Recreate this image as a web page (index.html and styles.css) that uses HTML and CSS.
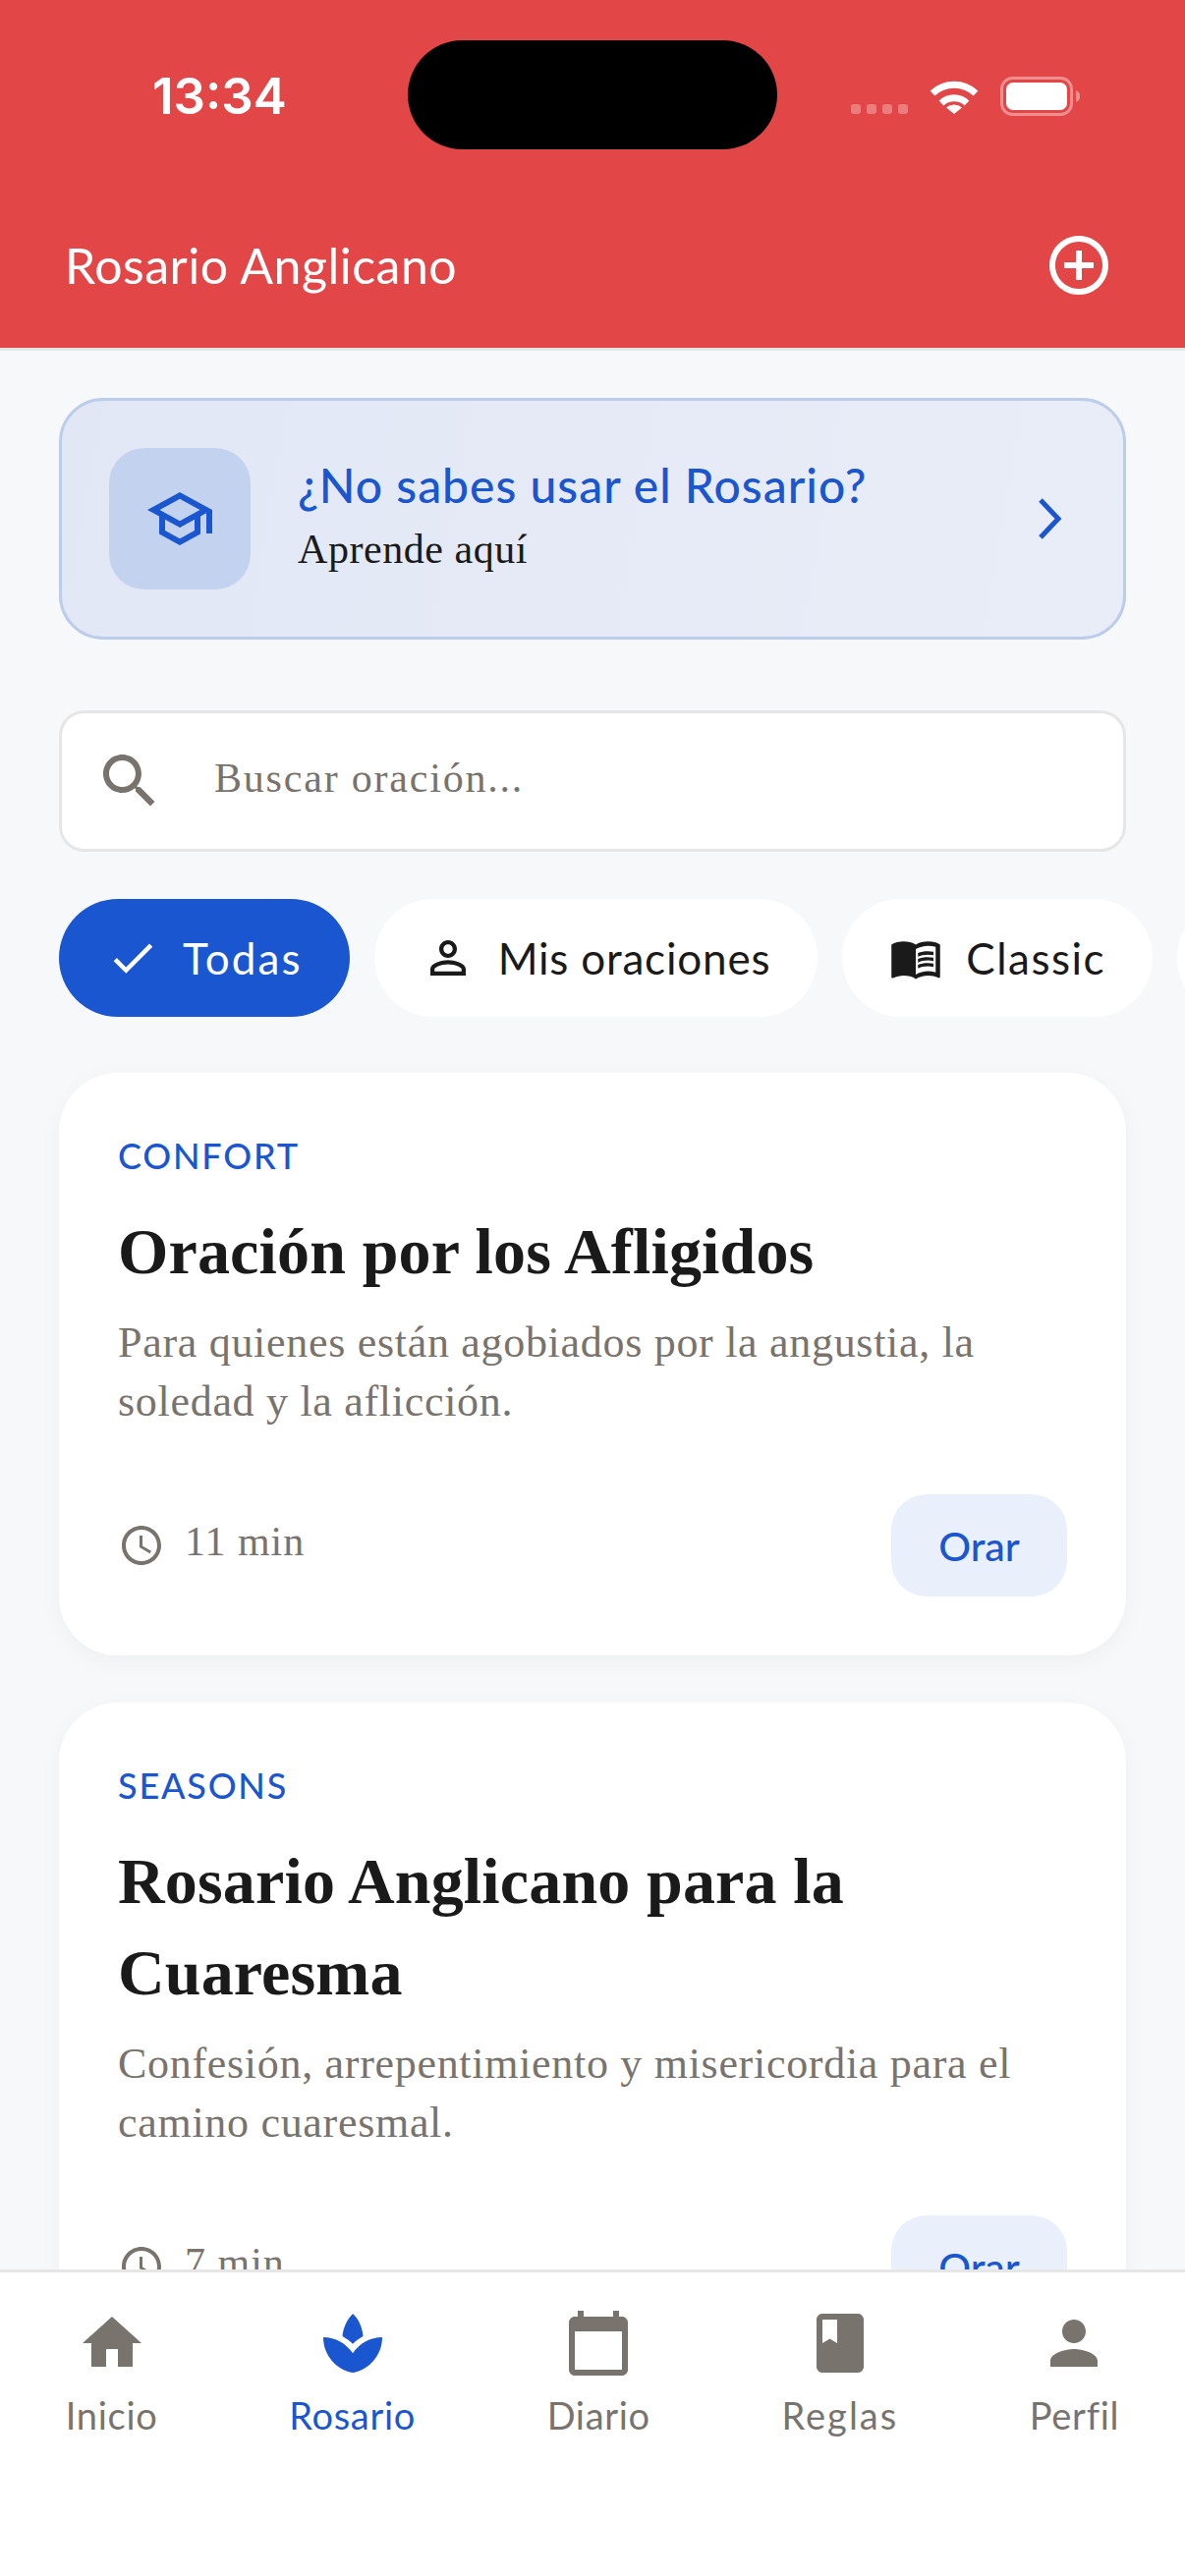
FILE: index.html
```html
<!DOCTYPE html>
<html lang="es">
<head>
<meta charset="utf-8">
<title>Rosario Anglicano</title>
<link rel="stylesheet" href="styles.css">
</head>
<body>
<div class="app">
  <header class="header">
    <div class="status">
      <span class="time">13:34</span>
      <div class="island"></div>
      <div class="status-icons">
        <svg class="dots" width="58" height="10" viewBox="0 0 58 10"><rect width="10" height="10" rx="3"/><rect x="16" width="10" height="10" rx="3"/><rect x="32" width="10" height="10" rx="3"/><rect x="48" width="10" height="10" rx="3"/></svg>
        <svg class="wifi" width="50" height="36" viewBox="0 0 50 36"><path d="M3 15 A 32 32 0 0 1 47 15" fill="none" stroke="#fff" stroke-width="7"/><path d="M12 25 A 19 19 0 0 1 38 25" fill="none" stroke="#fff" stroke-width="7"/><path d="M25 36 L17 29.5 A 12 12 0 0 1 33 29.5 Z" fill="#fff"/></svg>
        <svg class="battery" width="82" height="40" viewBox="0 0 82 40"><rect x="1.5" y="1.5" width="71" height="37" rx="11" fill="none" stroke="#fff" stroke-opacity=".4" stroke-width="3"/><rect x="6" y="6" width="62" height="28" rx="7" fill="#fff"/><path d="M77 14 C80 15 81 17 81 20 C81 23 80 25 77 26 Z" fill="#fff" fill-opacity=".4"/></svg>
      </div>
    </div>
    <div class="title-row">
      <h1 class="app-title">Rosario Anglicano</h1>
      <svg class="icon" viewBox="0 0 24 24" fill="#fff"><path d="M13 7h-2v4H7v2h4v4h2v-4h4v-2h-4V7zm-1-5C6.48 2 2 6.48 2 12s4.48 10 10 10 10-4.48 10-10S17.52 2 12 2zm0 18c-4.41 0-8-3.59-8-8s3.59-8 8-8 8 3.59 8 8-3.59 8-8 8z"/></svg>
    </div>
  </header>

  <main class="content">
    <section class="banner">
      <div class="banner-icon">
        <svg class="icon" viewBox="0 0 24 24" fill="#1a56cf"><path d="M12 3L1 9l4 2.18v6L12 21l7-3.82v-6l2-1.09V17h2V9L12 3zm6.82 6L12 12.72 5.18 9 12 5.28 18.82 9zM17 15.99l-5 2.73-5-2.73v-3.72L12 15l5-2.73v3.72z"/></svg>
      </div>
      <div class="banner-text">
        <div class="banner-title">¿No sabes usar el Rosario?</div>
        <div class="banner-sub">Aprende aquí</div>
      </div>
      <svg class="chevron" width="28" height="44" viewBox="0 0 28 44"><path d="M4 3 L22 22 L4 41" fill="none" stroke="#1a56cf" stroke-width="5"/></svg>
    </section>

    <div class="search">
      <svg class="icon" viewBox="0 0 24 24" fill="#78736d"><path d="M15.5 14h-.79l-.28-.27C15.41 12.59 16 11.11 16 9.5 16 5.91 13.09 3 9.5 3S3 5.91 3 9.5 5.91 16 9.5 16c1.61 0 3.09-.59 4.23-1.57l.27.28v.79l5 4.99L20.49 19l-4.99-5zm-6 0C7.01 14 5 11.99 5 9.5S7.01 5 9.5 5 14 7.01 14 9.5 11.99 14 9.5 14z"/></svg>
      <span class="placeholder">Buscar oración...</span>
    </div>

    <div class="chips">
      <div class="chip chip-active">
        <svg class="chip-icon" viewBox="0 0 24 24" fill="#fff"><path d="M9 16.17L4.83 12l-1.42 1.41L9 19 21 7l-1.41-1.41z"/></svg>
        <span class="chip-label chip-label-todas">Todas</span>
      </div>
      <div class="chip">
        <svg class="chip-icon" viewBox="0 0 24 24" fill="#1a1a1a"><path d="M12 5.9c1.16 0 2.1.94 2.1 2.1s-.94 2.1-2.1 2.1S9.9 9.16 9.9 8s.94-2.1 2.1-2.1m0 9c2.97 0 6.1 1.46 6.1 2.1v1.1H5.9V17c0-.64 3.13-2.1 6.1-2.1M12 4C9.79 4 8 5.79 8 8s1.79 4 4 4 4-1.79 4-4-1.79-4-4-4zm0 9c-2.67 0-8 1.34-8 4v3h16v-3c0-2.66-5.33-4-8-4z"/></svg>
        <span class="chip-label chip-label-mis">Mis oraciones</span>
      </div>
      <div class="chip">
        <svg class="chip-icon" viewBox="0 0 24 24" fill="#1a1a1a"><path d="M21 5c-1.11-.35-2.33-.5-3.5-.5-1.95 0-4.05.4-5.5 1.5-1.45-1.1-3.55-1.5-5.5-1.5S2.45 4.9 1 6v14.65c0 .25.25.5.5.5.1 0 .15-.05.25-.05C3.1 20.45 5.05 20 6.5 20c1.95 0 4.05.4 5.5 1.5 1.35-.85 3.8-1.5 5.5-1.5 1.65 0 3.35.3 4.75 1.05.1.05.15.05.25.05.25 0 .5-.25.5-.5V6c-.6-.45-1.25-.75-2-1zm0 13.5c-1.1-.35-2.3-.5-3.5-.5-1.7 0-4.15.65-5.5 1.5V8c1.35-.85 3.8-1.5 5.5-1.5 1.2 0 2.4.15 3.5.5v11.5z"/><path d="M17.5 10.5c.88 0 1.73.09 2.5.26V9.24c-.79-.15-1.64-.24-2.5-.24-1.7 0-3.24.29-4.5.83v1.66c1.13-.64 2.7-.99 4.5-.99zM13 12.49v1.66c1.13-.64 2.7-.99 4.5-.99.88 0 1.73.09 2.5.26V11.9c-.79-.15-1.64-.24-2.5-.24-1.7 0-3.24.3-4.5.83zM17.5 14.33c-1.7 0-3.24.29-4.5.83v1.66c1.13-.64 2.7-.99 4.5-.99.88 0 1.73.09 2.5.26v-1.52c-.79-.16-1.64-.24-2.5-.24z"/></svg>
        <span class="chip-label chip-label-classic">Classic</span>
      </div>
      <div class="chip chip-rest"></div>
    </div>

    <article class="card">
      <div class="card-tag">CONFORT</div>
      <h2 class="card-title">Oración por los Afligidos</h2>
      <p class="card-desc">Para quienes están agobiados por la angustia, la soledad y la aflicción.</p>
      <div class="card-foot">
        <div class="duration">
          <svg class="clock" viewBox="0 0 24 24" fill="#78736d"><path d="M11.99 2C6.47 2 2 6.48 2 12s4.47 10 9.99 10C17.52 22 22 17.52 22 12S17.52 2 11.99 2zM12 20c-4.42 0-8-3.58-8-8s3.58-8 8-8 8 3.58 8 8-3.58 8-8 8z"/><path d="M12.5 7H11v6l5.25 3.15.75-1.23-4.5-2.67z"/></svg>
          <span class="duration-text">11 min</span>
        </div>
        <div class="pray">Orar</div>
      </div>
    </article>

    <article class="card">
      <div class="card-tag">SEASONS</div>
      <h2 class="card-title">Rosario Anglicano para la Cuaresma</h2>
      <p class="card-desc">Confesión, arrepentimiento y misericordia para el camino cuaresmal.</p>
      <div class="card-foot">
        <div class="duration">
          <svg class="clock" viewBox="0 0 24 24" fill="#78736d"><path d="M11.99 2C6.47 2 2 6.48 2 12s4.47 10 9.99 10C17.52 22 22 17.52 22 12S17.52 2 11.99 2zM12 20c-4.42 0-8-3.58-8-8s3.58-8 8-8 8 3.58 8 8-3.58 8-8 8z"/><path d="M12.5 7H11v6l5.25 3.15.75-1.23-4.5-2.67z"/></svg>
          <span class="duration-text">7 min</span>
        </div>
        <div class="pray">Orar</div>
      </div>
    </article>
  </main>

  <nav class="nav">
    <div class="nav-item">
      <svg class="icon" viewBox="0 0 24 24" fill="#78736d"><path d="M10 20v-6h4v6h5v-8h3L12 3 2 12h3v8z"/></svg>
      <span class="nav-label">Inicio</span>
    </div>
    <div class="nav-item nav-active">
      <svg class="icon" viewBox="0 0 24 24" fill="#1a56cf"><path d="M15.49 9.63c-.18-2.79-1.31-5.51-3.43-7.63-2.14 2.14-3.32 4.86-3.55 7.63 1.28.68 2.46 1.56 3.49 2.63 1.03-1.06 2.21-1.94 3.49-2.63zM12 15.45C9.85 12.17 6.18 10 2 10c0 5.32 3.36 9.82 8.03 11.49.63.23 1.29.4 1.97.51.68-.12 1.33-.29 1.97-.51C18.64 19.82 22 15.32 22 10c-4.18 0-7.85 2.17-10 5.45z"/></svg>
      <span class="nav-label">Rosario</span>
    </div>
    <div class="nav-item">
      <svg class="icon" viewBox="0 0 24 24" fill="#78736d"><path d="M20 3h-1V1h-2v2H7V1H5v2H4c-1.1 0-2 .9-2 2v16c0 1.1.9 2 2 2h16c1.1 0 2-.9 2-2V5c0-1.1-.9-2-2-2zm0 18H4V8h16v13z"/></svg>
      <span class="nav-label">Diario</span>
    </div>
    <div class="nav-item">
      <svg class="icon" viewBox="0 0 24 24" fill="#78736d"><path d="M18 2H6c-1.1 0-2 .9-2 2v16c0 1.1.9 2 2 2h12c1.1 0 2-.9 2-2V4c0-1.1-.9-2-2-2zM6 4h5v8l-2.5-1.5L6 12V4z"/></svg>
      <span class="nav-label nav-label-wide">Reglas</span>
    </div>
    <div class="nav-item">
      <svg class="icon" viewBox="0 0 24 24" fill="#78736d"><path d="M12 12c2.21 0 4-1.79 4-4s-1.79-4-4-4-4 1.79-4 4 1.79 4 4 4zm0 2c-2.67 0-8 1.34-8 4v2h16v-2c0-2.66-5.33-4-8-4z"/></svg>
      <span class="nav-label">Perfil</span>
    </div>
  </nav>
</div>
</body>
</html>
```
FILE: styles.css
```css
* { box-sizing: border-box; }
html, body { margin: 0; padding: 0; }
body { width: 1206px; height: 2622px; overflow: hidden; font-family: "Lato", sans-serif; background: #f7f8fa; color: #1a1a1a; }
.app { width: 1206px; height: 2622px; display: flex; flex-direction: column; }
.icon { width: 72px; height: 72px; display: block; flex: none; }

.header { background: #e34646; border-bottom: 3px solid #e6e6e6; height: 357px; flex: none; display: flex; flex-direction: column; }
.status { height: 234px; flex: none; position: relative; display: flex; justify-content: space-between; align-items: flex-start; padding: 68px 106px 0 155px; }
.time { font-family: "Inter", sans-serif; font-weight: 600; font-size: 51px; line-height: 60px; color: #fff; }
.island { position: absolute; left: 415px; top: 41px; width: 376px; height: 111px; background: #000; border-radius: 56px; }
.status-icons { display: flex; align-items: flex-end; gap: 22px; padding-top: 10px; }
.dots { fill: #fff; fill-opacity: .3; }
.battery { margin-bottom: -2px; }
.title-row { display: flex; justify-content: space-between; align-items: center; padding: 0 72px 0 66px; height: 72px; }
.app-title { margin: 0; font-weight: 400; font-size: 50px; line-height: 72px; color: #fff; letter-spacing: .5px; }

.content { flex: 1; min-height: 0; overflow: hidden; padding: 48px 60px 0; }

.banner { height: 246px; display: flex; align-items: center; gap: 48px; padding: 0 48px; border: 3px solid #bccdeb; border-radius: 45px; background: linear-gradient(100deg, #e1e7f5, #e9edf7); }
.banner-icon { width: 144px; height: 144px; flex: none; display: flex; align-items: center; justify-content: center; background: #c3d2ef; border-radius: 36px; }
.banner-text { flex: 1; min-width: 0; margin-top: -6px; }
.banner-title { font-size: 48px; line-height: 60px; color: #1a56cf; font-weight: 500; letter-spacing: 1px; }
.banner-sub { font-family: "Liberation Serif", serif; font-size: 42px; line-height: 54px; margin-top: 8px; color: #1a1a1a; letter-spacing: .55px; }
.chevron { flex: none; margin-right: 12px; }

.search { margin-top: 72px; height: 144px; display: flex; align-items: center; gap: 50px; padding: 0 33px; background: #fff; border: 3px solid #e6e6e6; border-radius: 26px; }
.placeholder { font-family: "Liberation Serif", serif; font-size: 42px; color: #78736d; letter-spacing: 1.8px; margin-top: -6px; }

.chips { margin: 48px -60px 0 0; display: flex; gap: 25px; overflow: hidden; }
.chip { height: 120px; flex: none; display: flex; align-items: center; gap: 24px; padding: 0 48px; background: #fff; border-radius: 60px; }
.chip-active { background: #1a56cf; color: #fff; }
.chip-icon { width: 54px; height: 54px; flex: none; display: block; }
.chip-label { font-size: 44px; line-height: 54px; }
.chip-label-todas { letter-spacing: 2.1px; }
.chip-label-mis { letter-spacing: .8px; }
.chip-label-classic { letter-spacing: 1.5px; }
.chip-rest { width: 120px; }

.card { margin-top: 48px; background: #fff; border-radius: 60px; padding: 60px; box-shadow: 0 6px 24px rgba(0, 0, 0, .04); }
.chips + .card { margin-top: 57px; }
.card-tag { font-size: 36px; line-height: 48px; font-weight: 500; letter-spacing: 1.8px; color: #1a56cf; }
.card-title { margin: 27px 0 0; font-family: "Liberation Serif", serif; font-weight: 700; font-size: 66px; line-height: 93px; letter-spacing: .15px; color: #1a1a1a; }
.card-desc { margin: 17px 0 0; font-family: "Liberation Serif", serif; font-size: 44px; line-height: 60px; letter-spacing: .7px; color: #78736d; }
.card-foot { margin-top: 64px; display: flex; align-items: center; justify-content: space-between; }
.duration { display: flex; align-items: center; gap: 20px; }
.clock { width: 48px; height: 48px; display: block; flex: none; }
.duration-text { font-family: "Liberation Serif", serif; font-size: 42px; line-height: 48px; color: #78736d; letter-spacing: 1px; margin-top: -9px; }
.pray { width: 179px; height: 104px; display: flex; align-items: center; justify-content: center; background: #eaf0fb; border-radius: 36px; font-size: 41px; font-weight: 500; color: #1a56cf; }

.nav { height: 312px; flex: none; position: relative; background: #fff; border-top: 3px solid #e6e6e6; display: flex; justify-content: space-around; align-items: flex-start; padding-top: 36px; }
.nav-item { display: flex; flex-direction: column; align-items: center; gap: 13px; color: #78736d; }
.nav-active { color: #1a56cf; }
.nav-label { font-size: 38px; line-height: 48px; letter-spacing: .7px; }
.nav-label-wide { letter-spacing: 2px; }
```
